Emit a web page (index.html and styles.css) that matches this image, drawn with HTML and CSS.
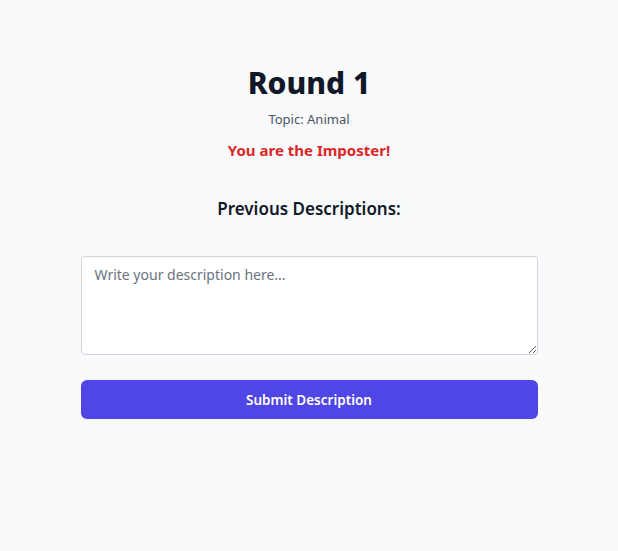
FILE: index.html
```html
<!DOCTYPE html>
<html>
<head>
<meta charset="utf-8">
<link rel="stylesheet" href="styles.css">
</head>
<body>
<main class="page">
  <div class="game">
    <h1 class="title">Round 1</h1>
    <p class="topic">Topic: Animal</p>
    <p class="role">You are the Imposter!</p>
    <h2 class="prev">Previous Descriptions:</h2>
    <form class="form">
      <textarea class="desc" placeholder="Write your description here..."></textarea>
      <button type="button" class="submit">Submit Description</button>
    </form>
  </div>
</main>
</body>
</html>
```
FILE: styles.css
```css
html, body {
  margin: 0;
  padding: 0;
  background: #f9fafb;
  font-family: "Noto Sans", "Open Sans", sans-serif;
  color: #111827;
}
.page {
  display: flex;
  justify-content: center;
  padding-top: 65px;
}
.game {
  width: 457px;
  display: flex;
  flex-direction: column;
  align-items: center;
}
.title {
  margin: 0;
  font-size: 30px;
  line-height: 36px;
  font-weight: 800;
  color: #111827;
}
.topic {
  margin: 8px 0 0;
  font-size: 13px;
  line-height: 20px;
  color: #4b5563;
}
.role {
  margin: 9px 0 0;
  font-size: 15px;
  line-height: 24px;
  font-weight: 700;
  color: #dc2626;
}
.prev {
  margin: 33px 0 0;
  font-size: 17px;
  line-height: 28px;
  font-weight: 600;
  color: #111827;
}
.form {
  width: 100%;
  margin-top: 33px;
  display: flex;
  flex-direction: column;
  gap: 25px;
}
.desc {
  box-sizing: border-box;
  width: 100%;
  height: 99px;
  padding: 8px 13px;
  border: 1px solid #d1d5db;
  border-radius: 4px;
  background: #fff;
  font-family: inherit;
  font-size: 14px;
  line-height: 20px;
  color: #111827;
  resize: vertical;
}
.desc::placeholder {
  color: #6b7280;
}
.submit {
  height: 39px;
  border: 0;
  border-radius: 6px;
  background: #4f46e5;
  color: #fff;
  font-family: inherit;
  font-size: 13.5px;
  font-weight: 600;
  cursor: pointer;
}
```
